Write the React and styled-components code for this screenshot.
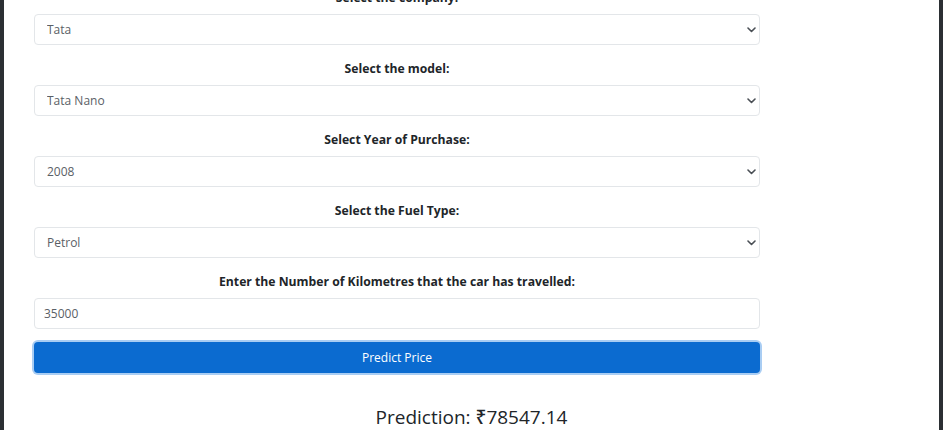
import React from 'react';
import styled, { createGlobalStyle } from 'styled-components';

const GlobalStyle = createGlobalStyle`
  html, body {
    margin: 0;
    padding: 0;
    background: #2b2f33;
    overflow: hidden;
  }
`;

const Frame = styled.div`
  margin: 0 4px;
  height: 430px;
  background: #ffffff;
  overflow: hidden;
  font-family: "Open Sans", "Noto Sans", sans-serif;
`;

const Form = styled.form`
  width: 726px;
  margin: -11px 0 0 30px;
  display: flex;
  flex-direction: column;
`;

const Group = styled.div`
  display: flex;
  flex-direction: column;
  margin-bottom: ${(p) => (p.last ? '13px' : '15px')};
`;

const Label = styled.label`
  display: block;
  text-align: center;
  font-size: 12.2px;
  font-weight: 700;
  line-height: 18px;
  color: #212529;
  margin-bottom: 7px;
`;

const SelectWrap = styled.div`
  position: relative;
`;

const Select = styled.select`
  appearance: none;
  -webkit-appearance: none;
  width: 100%;
  height: 31px;
  box-sizing: border-box;
  padding: 0 24px 0 12px;
  border: 1px solid #e3e6e9;
  border-radius: 4px;
  background: #fff;
  font-family: inherit;
  font-size: 12px;
  color: #5a6066;
  outline: none;
`;

const Chevron = styled.svg`
  position: absolute;
  right: 4px;
  top: 13px;
  width: 9px;
  height: 6px;
  pointer-events: none;
`;

const Input = styled.input`
  width: 100%;
  height: 31px;
  box-sizing: border-box;
  padding: 0 9px;
  border: 1px solid #e3e6e9;
  border-radius: 4px;
  font-family: inherit;
  font-size: 12px;
  color: #5a6066;
  outline: none;
`;

const Button = styled.button`
  height: 31px;
  border: none;
  border-radius: 4px;
  background: #0b6bd0;
  color: #ffffff;
  font-family: inherit;
  font-size: 12px;
  box-shadow: 0 0 0 2px #a9cdf3;
  cursor: pointer;
`;

const Result = styled.h4`
  margin: 31px 0 0;
  text-align: center;
  font-size: 19px;
  font-weight: 500;
  color: #212529;
`;

const fields = [
  { label: 'Select the company:', value: 'Tata' },
  { label: 'Select the model:', value: 'Tata Nano' },
  { label: 'Select Year of Purchase:', value: '2008' },
  { label: 'Select the Fuel Type:', value: 'Petrol' },
];

const App = () => (
  <>
    <GlobalStyle />
    <Frame>
      <Form onSubmit={(e) => e.preventDefault()}>
        {fields.map((f) => (
          <Group key={f.label}>
            <Label>{f.label}</Label>
            <SelectWrap>
              <Select defaultValue={f.value}>
                <option>{f.value}</option>
              </Select>
              <Chevron viewBox="0 0 9 6" fill="none" stroke="#4a4f55" strokeWidth="1.6" strokeLinecap="round" strokeLinejoin="round">
                <polyline points="1 1 4.5 4.5 8 1" />
              </Chevron>
            </SelectWrap>
          </Group>
        ))}
        <Group last>
          <Label>Enter the Number of Kilometres that the car has travelled:</Label>
          <Input defaultValue="35000" />
        </Group>
        <Button type="submit">Predict Price</Button>
      </Form>
      <Result>Prediction: ₹78547.14</Result>
    </Frame>
  </>
);

export default App;
